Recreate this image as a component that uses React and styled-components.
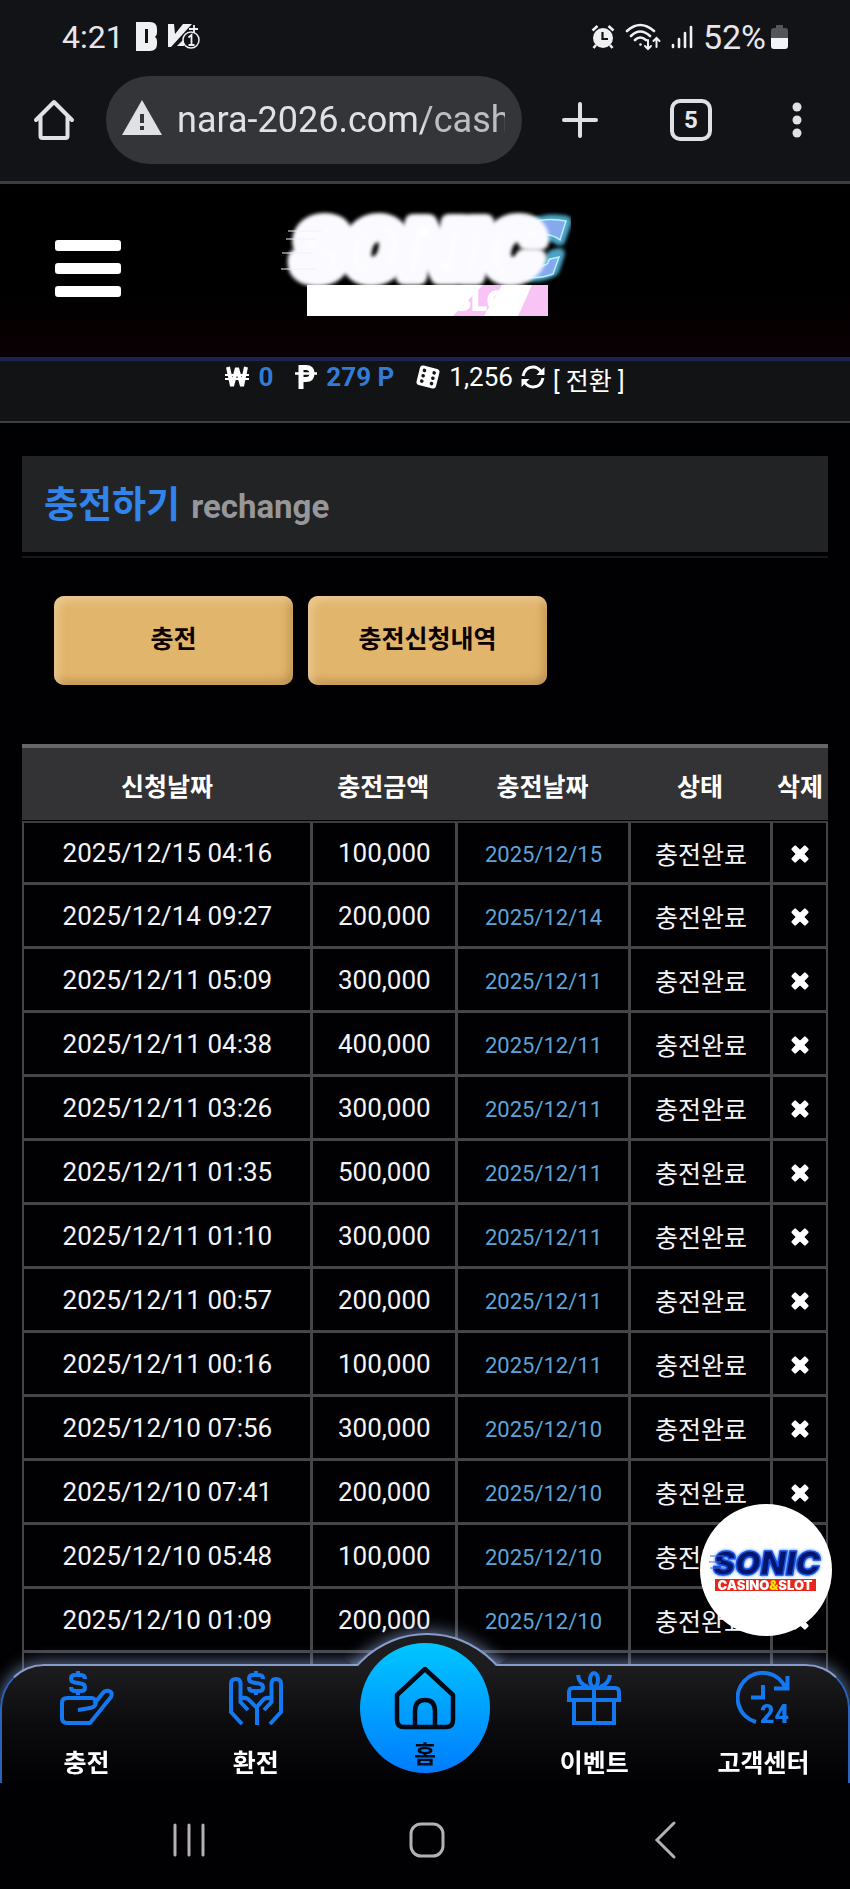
import React from "react";
import styled, { createGlobalStyle } from "styled-components";

const GlobalStyle = createGlobalStyle`
  * { box-sizing: border-box; }
  body {
    margin: 0;
    background: #010103;
    color: #fff;
    font-family: Roboto, "Noto Sans CJK KR", sans-serif;
  }
  button { padding: 0; border: 0; background: none; color: inherit; font: inherit; cursor: pointer; }
  a { color: inherit; text-decoration: none; }
  svg { display: block; flex: none; }
`;

const Page = styled.div`
  min-height: 100vh;
  padding-bottom: 120px;
`;

/* ---------- device status bar and browser bar ---------- */

const BrowserChrome = styled.div`
  background: #121317;
  color: #e6e6ea;
  border-bottom: 3px solid #3c3d40;
`;

const StatusBar = styled.div`
  display: flex;
  align-items: center;
  justify-content: space-between;
  height: 76px;
  padding: 0 62px 2px;
`;

const StatusGroup = styled.div`
  display: flex;
  align-items: center;
  gap: ${(p) => p.$gap}px;
`;

const Clock = styled.time`
  font-size: 32px;
  line-height: 36px;
  margin-right: 2px;
`;

const BatteryText = styled.span`
  font-size: 34px;
  line-height: 36px;
`;

const Toolbar = styled.div`
  display: flex;
  align-items: center;
  padding: 0 40px 17px 33px;
`;

const AddressPill = styled.label`
  flex: 1;
  min-width: 0;
  display: flex;
  align-items: center;
  gap: 14px;
  height: 88px;
  margin: 0 40px 0 31px;
  padding: 0 17px 0 15px;
  border-radius: 44px;
  background: #343539;
`;

const AddressInput = styled.input`
  flex: 1;
  min-width: 0;
  padding: 0;
  border: 0;
  outline: 0;
  background: none;
  color: #e0e1e5;
  font: 36px/48px Roboto, sans-serif;
  mask-image: linear-gradient(90deg, #000 75%, rgba(0, 0, 0, 0.8) 76%);
`;

const ToolbarActions = styled.div`
  display: flex;
  gap: 72px;
  align-items: center;
`;

const TabsButton = styled.button`
  width: 42px;
  height: 42px;
  border: 4px solid #e0e1e5;
  border-radius: 10px;
  font-size: 24px;
  line-height: 34px;
  font-weight: 700;
`;

/* ---------- site header ---------- */

const Header = styled.header`
  display: grid;
  grid-template-columns: 1fr auto 1fr;
  align-items: center;
  height: 177px;
  padding: 0 55px 4px;
  background: linear-gradient(#000 60%, #080002 90%);
  border-bottom: 4px solid #1b2452;
`;

const MenuButton = styled.button`
  display: flex;
  flex-direction: column;
  gap: 12px;
  width: 66px;
`;

const MenuBar = styled.span`
  height: 11px;
  border-radius: 3px;
  background: #fff;
`;

const Balance = styled.div`
  display: flex;
  justify-content: center;
  align-items: flex-start;
  gap: 22px;
  height: 62px;
  background: #121314;
  border-bottom: 2px solid #3e3f42;
  font-size: 26px;
  line-height: 32px;
`;

const BalanceItem = styled.span`
  display: flex;
  align-items: center;
  gap: 9px;
  font-weight: ${(p) => (p.$bold ? 700 : 400)};
`;

const BalanceGroup = styled.div`
  display: flex;
  align-items: flex-start;
  gap: 8px;
`;

const BalanceValue = styled.span`
  color: #337bd7;
`;

const ConvertButton = styled.button`
  display: flex;
  align-items: flex-start;
  gap: 8px;
  line-height: 32px;

  svg {
    margin-top: 4px;
  }
`;

const ConvertLabel = styled.span`
  font-size: 25px;
  line-height: 42px;
`;

/* ---------- page body ---------- */

const Main = styled.main`
  padding: 33px 22px 0;
`;

const TitleBar = styled.div`
  padding-bottom: 4px;
  border-bottom: 2px solid #17191b;
`;

const Title = styled.h1`
  display: flex;
  align-items: baseline;
  gap: 11px;
  height: 96px;
  margin: 0;
  padding: 20px 22px 16px;
  background: #222325;
  font-size: 37px;
  line-height: 60px;
  color: #3184ec;
`;

const TitleSub = styled.span`
  font-size: 33px;
  color: #979799;
`;

const ButtonRow = styled.div`
  display: flex;
  gap: 15px;
  padding: 38px 32px 59px;
`;

const GoldButton = styled.button`
  width: 239px;
  height: 89px;
  padding-bottom: 2px;
  border-radius: 10px;
  background: #e1b56c;
  box-shadow: inset 4px 4px 8px rgba(240, 208, 160, 0.8), inset -3px -4px 8px rgba(160, 115, 55, 0.6);
  color: #0a0000;
  font-size: 25px;
  line-height: 36px;
  font-weight: 700;
`;

const Table = styled.table`
  width: 100%;
  table-layout: fixed;
  border-collapse: separate;
  border-spacing: 0;
`;

const HeadCell = styled.th`
  width: ${(p) => p.$width};
  height: 77px;
  padding: 7px 0 0 2px;
  background: #333335;
  border-top: 4px solid #666668;
  border-bottom: 1px solid #000;
  font-size: 25px;
  line-height: 36px;
  font-weight: 700;
  white-space: nowrap;
`;

const Cell = styled.td`
  height: 64px;
  padding: ${(p) => p.$drop || 0}px 0 0 1px;
  border-left: 3px solid #454548;
  border-bottom: 3px solid #454548;
  text-align: center;
  color: ${(p) => p.$color || "#f4f4f6"};
  font-size: ${(p) => p.$size}px;
  line-height: 36px;
  white-space: nowrap;

  tr:first-child > & {
    border-top: 2px solid #3c3c3f;
  }
  &:first-child {
    border-left-width: 2px;
  }
  &:last-child {
    border-right: 2px solid #454548;
  }
`;

const DeleteButton = styled.button`
  display: inline-block;
  vertical-align: middle;
`;

/* ---------- floating layers ---------- */

const FloatingBadge = styled.a`
  position: fixed;
  right: 18px;
  bottom: 253px;
  width: 132px;
  height: 132px;
  border-radius: 50%;
  background: #fff;
`;

const Footer = styled.footer`
  position: fixed;
  left: 0;
  right: 0;
  bottom: 0;
  background: linear-gradient(transparent 60px, #010003 60px);
`;

const SiteNav = styled.nav`
  position: relative;
  display: grid;
  grid-template-columns: repeat(5, 1fr);
  height: 119px;
  border: 2px solid #2c62b8;
  border-top-color: #869ccb;
  border-bottom: 0;
  border-radius: 44px 44px 0 0;
  background: linear-gradient(#1d1d20, #0c0b0e 50%, #010003);
  box-shadow: 0 -2px 16px rgba(160, 185, 235, 0.6);

  &::before {
    content: "";
    position: absolute;
    top: -33px;
    left: calc(50% - 92px);
    width: 184px;
    height: 184px;
    border: 2px solid #869ccb;
    border-radius: 50%;
    background: #1d1d20;
    box-shadow: 0 -2px 16px rgba(160, 185, 235, 0.6);
    clip-path: polygon(0 -24px, 100% -24px, 100% 16px, 163px 33px, 21px 33px, 0 16px);
  }
`;

const NavLink = styled.a`
  display: flex;
  flex-direction: column;
  align-items: center;
  gap: 21px;
  padding-top: 5px;
  font-size: 25px;
  line-height: 36px;
  font-weight: 700;
`;

const HomeLink = styled.a`
  position: relative;
  justify-self: center;
  display: flex;
  flex-direction: column;
  align-items: center;
  gap: 7px;
  width: 130px;
  height: 130px;
  margin-top: -23px;
  padding-top: 23px;
  border-radius: 50%;
  background: linear-gradient(#00c6ff, #007cff);
  color: #020814;
  font-size: 24px;
  line-height: 36px;
  font-weight: 700;
`;

const SystemNav = styled.div`
  position: relative;
  display: flex;
  align-items: center;
  justify-content: space-between;
  height: 106px;
  padding: 7px 161px 0 165px;
  background: #010003;
`;

/* ---------- drawings ---------- */

const StatusIcons = () => (
  <svg width="66" height="32" viewBox="0 0 66 32" aria-hidden="true">
    <path fill="#f0f0f3" fillRule="evenodd" d="M0 1h14q7 0 7 7v4q0 2-2 4 2 1 2 4v3q0 7-7 7H0zM9 8v14h3V8z" />
    <path fill="#f0f0f3" d="M32 3h6l1 10 8-10h9L35 26h-3z" />
    <path fill="#f0f0f3" d="M42 24l6-6v7h-7z" />
    <circle cx="55" cy="19" r="8" fill="#121317" stroke="#f0f0f3" strokeWidth="1.500" />
    <path d="M52.500 16.500L55.500 14v10M52.500 24h6M58 4v8M53 8h9" fill="none" stroke="#f0f0f3" strokeWidth="1.800" />
  </svg>
);

const AlarmIcon = () => (
  <svg width="24" height="26" viewBox="0 0 24 26" aria-hidden="true">
    <circle cx="12" cy="14" r="10" fill="#f0f0f3" />
    <path d="M1.500 6.500l5-4.500M22.500 6.500l-5-4.500M5 21l-2.500 3M19 21l2.500 3" stroke="#f0f0f3" strokeWidth="2.600" />
    <path d="M11.500 8v7h5.500" fill="none" stroke="#121317" strokeWidth="2.200" />
  </svg>
);

const WifiIcon = () => (
  <svg width="36" height="28" viewBox="0 0 36 28" fill="none" stroke="#f0f0f3" strokeWidth="2.600" strokeLinecap="round" aria-hidden="true">
    <path d="M2 8q13-12 27 0M6 13q9-9 19 0M10 17q5-5 11 0" />
    <circle cx="15.500" cy="21.500" r="1.300" fill="#f0f0f3" stroke="none" />
    <path strokeWidth="2" d="M23 17v9m-3-3l3 3 3-3M31.500 24V15m-3 3l3-3 3 3" />
  </svg>
);

const SignalIcon = () => (
  <svg width="22" height="24" viewBox="0 0 22 24" stroke="#f0f0f3" strokeWidth="2.600" strokeLinecap="round" aria-hidden="true">
    <path d="M2 20v2M8 14v8M14 8v14M20 2v20" />
  </svg>
);

const BatteryIcon = () => (
  <svg width="17" height="26" viewBox="0 0 17 26" aria-hidden="true">
    <path fill="#55565a" d="M5 1h7v3h2q3 0 3 3v7H0V7q0-3 3-3h2z" />
    <path fill="#f4f4f6" d="M0 14h17v8q0 3-3 3H3q-3 0-3-3z" />
  </svg>
);

const BrowserHomeIcon = () => (
  <svg width="42" height="42" viewBox="0 0 42 42" fill="none" stroke="#e0e1e5" strokeWidth="4" strokeLinejoin="round" strokeLinecap="round" aria-hidden="true">
    <path d="M3 21L21 3l18 18M7.500 18v19q0 2 2 2h23q2 0 2-2V18" />
  </svg>
);

const WarningIcon = () => (
  <svg width="42" height="40" viewBox="0 0 42 40" aria-hidden="true">
    <path fill="#e0e1e5" d="M21 0l20 35H1z" />
    <path fill="#343539" d="M19 14h4v9h-4zM19 26h4v4h-4z" />
  </svg>
);

const PlusIcon = () => (
  <svg width="36" height="36" viewBox="0 0 36 36" stroke="#e0e1e5" strokeWidth="4" strokeLinecap="round" aria-hidden="true">
    <path d="M18 2v32M2 18h32" />
  </svg>
);

const DotsIcon = () => (
  <svg width="26" height="36" viewBox="0 0 26 36" fill="#e0e1e5" aria-hidden="true">
    <circle cx="13" cy="5" r="4.500" />
    <circle cx="13" cy="18" r="4.500" />
    <circle cx="13" cy="31" r="4.500" />
  </svg>
);

const heavy = { fontFamily: "Inter, sans-serif", fontWeight: 900 };

const HeaderLogo = () => (
  <svg width="310" height="120" viewBox="0 0 310 120" role="img" aria-label="SONIC CASINO&SLOT">
    <defs>
      <filter id="halo" x="-10%" y="-20%" width="120%" height="140%">
        <feGaussianBlur in="SourceGraphic" stdDeviation="2.500" result="soft" />
        <feMerge>
          <feMergeNode in="soft" />
          <feMergeNode in="soft" />
          <feMergeNode in="soft" />
        </feMerge>
      </filter>
    </defs>
    <g fill="#4fa3c4" stroke="#4fa3c4" strokeWidth="6" strokeLinejoin="round" filter="url(#halo)">
      <path d="M262 15q17-7 35-3l-7 20q-9-8-26-3zM258 62q18-4 24-16l8-2-6 18q-13 7-26 5z" />
    </g>
    <path fill="#86a9ee" stroke="#b4f2ff" strokeWidth="1.500" d="M258 14q20-6 38-2l-6 19q-9-8-26-4zM254 60q20-2 24-6 0-3 2-4l9-2-6 17q-13 5-30 3z" />
    <text {...heavy} x="24" y="68" fontStyle="italic" fontSize="76" fill="#fff" stroke="#fbfbff" strokeWidth="12" strokeLinejoin="round" filter="url(#halo)">SONIC</text>
    <path d="M18 22h34M16 30h30M12 44h30M11 60h36" stroke="#eef0ff" strokeWidth="1" />
    <path d="M37 76h241v31H37z" fill="#fff" />
    <path d="M183 107L213 76H232L214 107zM248 107L262 76H278V107z" fill="#f8c4f6" />
    <text {...heavy} x="46" y="102" fontSize="29" fill="#fff">CASINO&amp;SLOT</text>
  </svg>
);

const BadgeLogo = () => (
  <svg width="132" height="132" viewBox="0 0 132 132" role="img" aria-label="SONIC CASINO&SLOT">
    <defs>
      <filter id="glow" x="-10%" y="-30%" width="120%" height="160%">
        <feDropShadow dx="0" dy="0" stdDeviation="1.500" floodColor="#1f6bff" />
      </filter>
    </defs>
    <text {...heavy} fontStyle="italic" fontSize="33" x="13" y="71" fill="#04146e" stroke="#1450e0" strokeWidth="1.500" filter="url(#glow)">SONIC</text>
    <path d="M10 52h14M9 58h12M10 64h14" stroke="#4d6fd0" strokeWidth="1" />
    <path d="M15 75h101v12H15z" fill="#e8261c" />
    <text {...heavy} x="65" y="86" fontSize="13" textAnchor="middle" fill="#fff">
      CASINO<tspan fill="#ffe000">&amp;</tspan>SLOT
    </text>
  </svg>
);

const WonIcon = () => (
  <svg width="24" height="24" viewBox="0 0 24 24" fill="none" stroke="#fff" aria-hidden="true">
    <path strokeWidth="4" strokeLinejoin="bevel" d="M3 2l4 19 5-18 5 18 4-19" />
    <path strokeWidth="2" d="M0 10h24M0 14h24" />
  </svg>
);

const PointIcon = () => (
  <svg width="22" height="24" viewBox="0 0 22 24" fill="none" stroke="#fff" aria-hidden="true">
    <path strokeWidth="5" d="M6 24V2.500h5q6 0 6 6t-6 6H6" />
    <path strokeWidth="2.500" d="M0 8.500h22" />
  </svg>
);

const DiceIcon = () => (
  <svg width="24" height="24" viewBox="0 0 24 24" aria-hidden="true">
    <g transform="rotate(14 12 12)">
      <rect x="2" y="2" width="20" height="20" rx="3" fill="#fff" />
      <g fill="#121314">
        <circle cx="7" cy="6.500" r="1.800" />
        <circle cx="7" cy="12" r="1.800" />
        <circle cx="7" cy="17.500" r="1.800" />
        <circle cx="17" cy="6.500" r="1.800" />
        <circle cx="17" cy="12" r="1.800" />
        <circle cx="17" cy="17.500" r="1.800" />
      </g>
    </g>
  </svg>
);

const RefreshIcon = () => (
  <svg width="24" height="24" viewBox="0 0 24 24" aria-hidden="true">
    <path fill="none" stroke="#fff" strokeWidth="3" d="M2 11Q4 2 12 2q5 0 8.500 5M22 13q-2 9-10 9-5 0-8.500-5" />
    <path fill="#fff" d="M23.500 2v8h-8zM.5 22v-8h8z" />
  </svg>
);

const CrossIcon = () => (
  <svg width="18" height="18" viewBox="0 0 18 18" stroke="#fff" strokeWidth="5.600" aria-hidden="true">
    <path d="M2.500 2.500l13 13M15.500 2.500l-13 13" />
    <path strokeWidth="2" strokeLinejoin="round" fill="#fff" d="M4 1.500L9 6l5-4.500L16.500 4 12 9l4.500 5-2.500 2.500L9 12l-5 4.500L1.500 14 6 9 1.500 4z" />
  </svg>
);

const navStroke = { fill: "none", stroke: "#1478f0", strokeWidth: 4 };
const dollar = "M7 -4Q7 -8 3 -8H-3Q-7 -8 -7 -4.500Q-7 -1 -3 -0.500L3 0.500Q7 1 7 4.500Q7 8 3 8H-3Q-7 8 -7 4M0 -12V-8M0 8V12";

const DepositIcon = () => (
  <svg width="54" height="54" viewBox="0 0 54 54" {...navStroke} aria-hidden="true">
    <path d={dollar} transform="translate(18 12)" />
    <path strokeLinejoin="round" d="M18 39L30 37Q36 36 36 31Q35 27 31 27H7Q2 27 2 32V47Q2 52 7 52H30L51 26Q53 21 49 20Q45 19 42 23L34 33" />
  </svg>
);

const WithdrawIcon = () => (
  <svg width="54" height="54" viewBox="0 0 54 54" {...navStroke} aria-hidden="true">
    <path d={dollar} transform="translate(27 12)" />
    <path d="M13 53L2 41V13Q2 8 7 8Q11.500 8 11.500 13V31L19 39M11.500 28Q17 25 21 30L27 36" />
    <path d="M41 53L52 41V13Q52 8 47 8Q42.500 8 42.500 13V31L35 39M42.500 28Q37 25 33 30L28 36V54" />
  </svg>
);

const EventIcon = () => (
  <svg width="54" height="54" viewBox="0 0 54 54" {...navStroke} aria-hidden="true">
    <path d="M2 29V21Q2 17 6 17H48Q52 17 52 21V29ZM7 29V52H47V29M27 17V52" />
    <ellipse cx="27" cy="9" rx="4" ry="7" />
    <path d="M11 4Q12 13 21 16M43 4Q42 13 33 16" />
  </svg>
);

const SupportIcon = () => (
  <svg width="54" height="54" viewBox="0 0 54 54" {...navStroke} aria-hidden="true">
    <path d="M20 51A25 25 0 1 1 50 18M51.500 5V17.500H38M27 14V26.500H15" />
    <text x="24" y="52" fontFamily="Roboto, sans-serif" fontWeight="900" fontSize="25" fill="#1478f0" stroke="none">24</text>
  </svg>
);

const HomeIcon = () => (
  <svg width="62" height="64" viewBox="0 0 62 64" fill="none" stroke="#020814" strokeWidth="4.500" strokeLinejoin="round" aria-hidden="true">
    <path d="M31 3L3 29V54Q3 61 10 61H52Q59 61 59 54V29ZM21 61V45Q21 34 31 34Q41 34 41 45V61" />
  </svg>
);

const sys = { width: 48, height: 40, viewBox: "0 0 48 40", fill: "none", stroke: "#b5b0b6", strokeWidth: 3, "aria-hidden": true };

const columns = [
  ["신청날짜", "auto"],
  ["충전금액", "18%"],
  ["충전날짜", "21.5%"],
  ["상태", "17.6%"],
  ["삭제", "7.2%"],
];

const deposits = [
  ["2025/12/15", "04:16", "100,000"],
  ["2025/12/14", "09:27", "200,000"],
  ["2025/12/11", "05:09", "300,000"],
  ["2025/12/11", "04:38", "400,000"],
  ["2025/12/11", "03:26", "300,000"],
  ["2025/12/11", "01:35", "500,000"],
  ["2025/12/11", "01:10", "300,000"],
  ["2025/12/11", "00:57", "200,000"],
  ["2025/12/11", "00:16", "100,000"],
  ["2025/12/10", "07:56", "300,000"],
  ["2025/12/10", "07:41", "200,000"],
  ["2025/12/10", "05:48", "100,000"],
  ["2025/12/10", "01:09", "200,000"],
];

export default function App() {
  return (
    <>
      <GlobalStyle />
      <Page>
        <BrowserChrome>
          <StatusBar>
            <StatusGroup $gap={10}>
              <Clock>4:21</Clock>
              <StatusIcons />
            </StatusGroup>
            <StatusGroup $gap={10}>
              <AlarmIcon />
              <WifiIcon />
              <SignalIcon />
              <StatusGroup $gap={5}>
                <BatteryText>52%</BatteryText>
                <BatteryIcon />
              </StatusGroup>
            </StatusGroup>
          </StatusBar>
          <Toolbar>
            <button aria-label="Home"><BrowserHomeIcon /></button>
            <AddressPill>
              <WarningIcon />
              <AddressInput aria-label="Address" defaultValue="nara-2026.com/cash" />
            </AddressPill>
            <ToolbarActions>
              <button aria-label="New tab"><PlusIcon /></button>
              <TabsButton aria-label="5 tabs">5</TabsButton>
              <button aria-label="More"><DotsIcon /></button>
            </ToolbarActions>
          </Toolbar>
        </BrowserChrome>

        <Header>
          <MenuButton aria-label="Menu">
            <MenuBar />
            <MenuBar />
            <MenuBar />
          </MenuButton>
          <a href="#home"><HeaderLogo /></a>
        </Header>

        <Balance>
          <BalanceItem $bold><WonIcon /><BalanceValue>0</BalanceValue></BalanceItem>
          <BalanceItem $bold><PointIcon /><BalanceValue>279 P</BalanceValue></BalanceItem>
          <BalanceGroup>
            <BalanceItem><DiceIcon />1,256</BalanceItem>
            <ConvertButton>
              <RefreshIcon />
              <ConvertLabel>[ 전환 ]</ConvertLabel>
            </ConvertButton>
          </BalanceGroup>
        </Balance>

        <Main>
          <TitleBar>
            <Title>충전하기<TitleSub>rechange</TitleSub></Title>
          </TitleBar>
          <ButtonRow>
            <GoldButton>충전</GoldButton>
            <GoldButton>충전신청내역</GoldButton>
          </ButtonRow>
          <Table>
            <thead>
              <tr>
                {columns.map(([name, width]) => (
                  <HeadCell key={name} $width={width} scope="col">{name}</HeadCell>
                ))}
              </tr>
            </thead>
            <tbody>
              {deposits.map(([date, time, amount]) => (
                <tr key={date + time}>
                  <Cell $size={26}>{date} {time}</Cell>
                  <Cell $size={26}>{amount}</Cell>
                  <Cell $size={22} $color="#5fa3d8" $drop={4}>{date}</Cell>
                  <Cell $size={25} $drop={6}>충전완료</Cell>
                  <Cell $size={25}>
                    <DeleteButton aria-label="삭제"><CrossIcon /></DeleteButton>
                  </Cell>
                </tr>
              ))}
              <tr>
                {columns.map(([name]) => <Cell key={name} $size={25} />)}
              </tr>
            </tbody>
          </Table>
        </Main>
      </Page>

      <FloatingBadge href="#home"><BadgeLogo /></FloatingBadge>

      <Footer>
        <SiteNav>
          <NavLink href="#deposit"><DepositIcon />충전</NavLink>
          <NavLink href="#withdraw"><WithdrawIcon />환전</NavLink>
          <HomeLink href="#home"><HomeIcon />홈</HomeLink>
          <NavLink href="#event"><EventIcon />이벤트</NavLink>
          <NavLink href="#support"><SupportIcon />고객센터</NavLink>
        </SiteNav>
        <SystemNav>
          <button aria-label="Recents">
            <svg {...sys}><path strokeLinecap="round" d="M10 5v30M24 5v30M38 5v30" /></svg>
          </button>
          <button aria-label="Device home">
            <svg {...sys}><rect x="8" y="4" width="32" height="32" rx="10" /></svg>
          </button>
          <button aria-label="Back">
            <svg {...sys}><path strokeLinecap="round" d="M33 3L16 20l17 17" /></svg>
          </button>
        </SystemNav>
      </Footer>
    </>
  );
}
